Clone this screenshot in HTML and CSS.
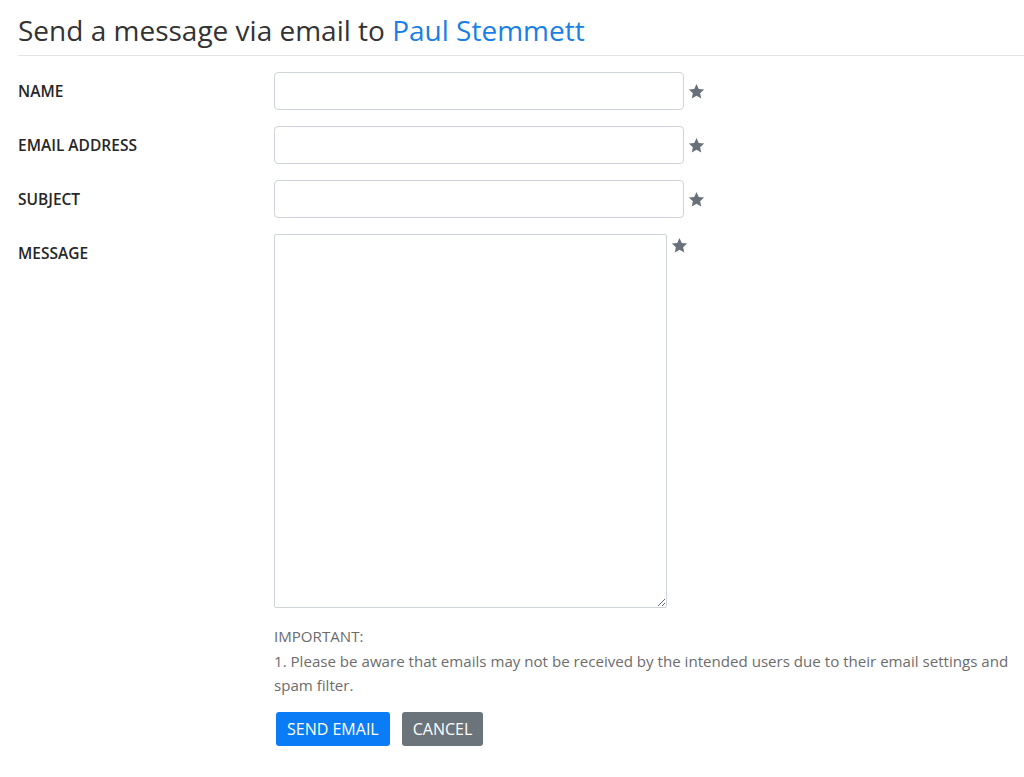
FILE: index.html
```html
<!DOCTYPE html>
<html lang="en">
<head>
    <meta charset="UTF-8">
    <title>Send a message</title>
    <link rel="stylesheet" href="styles.css">
</head>
<body>
    <h1 class="page-title">Send a message via email to <a href="#">Paul Stemmett</a></h1>

    <form class="mail-form">
        <label class="field-label" for="name">NAME</label>
        <div class="field">
            <input type="text" id="name" class="field-input">
            <svg class="req" viewBox="0 0 24 24"><path d="M12 1.5l3.2 7 7.6.8-5.7 5.1 1.6 7.5L12 18l-6.7 3.9 1.6-7.5-5.7-5.1 7.6-.8z"/></svg>
        </div>

        <label class="field-label" for="email">EMAIL ADDRESS</label>
        <div class="field">
            <input type="text" id="email" class="field-input">
            <svg class="req" viewBox="0 0 24 24"><path d="M12 1.5l3.2 7 7.6.8-5.7 5.1 1.6 7.5L12 18l-6.7 3.9 1.6-7.5-5.7-5.1 7.6-.8z"/></svg>
        </div>

        <label class="field-label" for="subject">SUBJECT</label>
        <div class="field">
            <input type="text" id="subject" class="field-input">
            <svg class="req" viewBox="0 0 24 24"><path d="M12 1.5l3.2 7 7.6.8-5.7 5.1 1.6 7.5L12 18l-6.7 3.9 1.6-7.5-5.7-5.1 7.6-.8z"/></svg>
        </div>

        <label class="field-label" for="message">MESSAGE</label>
        <div class="field field-top">
            <textarea id="message" class="field-area"></textarea>
            <svg class="req" viewBox="0 0 24 24"><path d="M12 1.5l3.2 7 7.6.8-5.7 5.1 1.6 7.5L12 18l-6.7 3.9 1.6-7.5-5.7-5.1 7.6-.8z"/></svg>
        </div>

        <div class="note">
            IMPORTANT:<br>
            1. Please be aware that emails may not be received by the intended users due to their email settings and spam filter.
        </div>

        <div class="actions">
            <button type="button" class="btn btn-primary">SEND EMAIL</button>
            <button type="button" class="btn btn-secondary">CANCEL</button>
        </div>
    </form>
</body>
</html>
```

FILE: styles.css
```css
body {
    margin: 0;
    padding: 0 0 0 18px;
    font-family: "Open Sans", sans-serif;
    background-color: #fff;
    color: #212529;
}

.page-title {
    margin: 0;
    padding: 12px 0 7px;
    font-size: 28px;
    font-weight: 400;
    line-height: 36px;
    color: #333;
    border-bottom: 1px solid #e3e3e3;
}

.page-title a {
    color: #1a7fe6;
    text-decoration: none;
}

.mail-form {
    display: grid;
    grid-template-columns: 256px 1fr;
    row-gap: 16px;
    padding-top: 16px;
    padding-right: 6px;
}

.field-label {
    font-size: 15.5px;
    font-weight: 600;
    color: #262626;
    line-height: 38px;
}

.field {
    display: flex;
    align-items: center;
    gap: 4px;
}

.field-top {
    align-items: flex-start;
}

.field-input {
    width: 410px;
    height: 38px;
    box-sizing: border-box;
    border: 1px solid #ced4da;
    border-radius: 4px;
    padding: 6px 12px;
    font: inherit;
}

.field-area {
    width: 393px;
    height: 374px;
    box-sizing: border-box;
    border: 1px solid #ced4da;
    border-radius: 2px;
    padding: 6px 12px;
    font: inherit;
    resize: vertical;
}

.req {
    width: 17px;
    height: 17px;
    fill: #68717a;
}

.field-top .req {
    margin-top: 3px;
}

.note {
    grid-column: 2;
    margin-top: 0;
    font-size: 15.1px;
    line-height: 24.5px;
    color: #6c6c6c;
}

.actions {
    grid-column: 2;
    display: flex;
    gap: 12px;
    padding-left: 2px;
    margin-top: -2px;
}

.btn {
    height: 34px;
    padding: 0 11px;
    border: none;
    border-radius: 3px;
    font-family: inherit;
    font-size: 16px;
    color: #fff;
    cursor: pointer;
}

.btn-primary {
    background-color: #0a7cf5;
}

.btn-secondary {
    background-color: #6b737b;
}
```
